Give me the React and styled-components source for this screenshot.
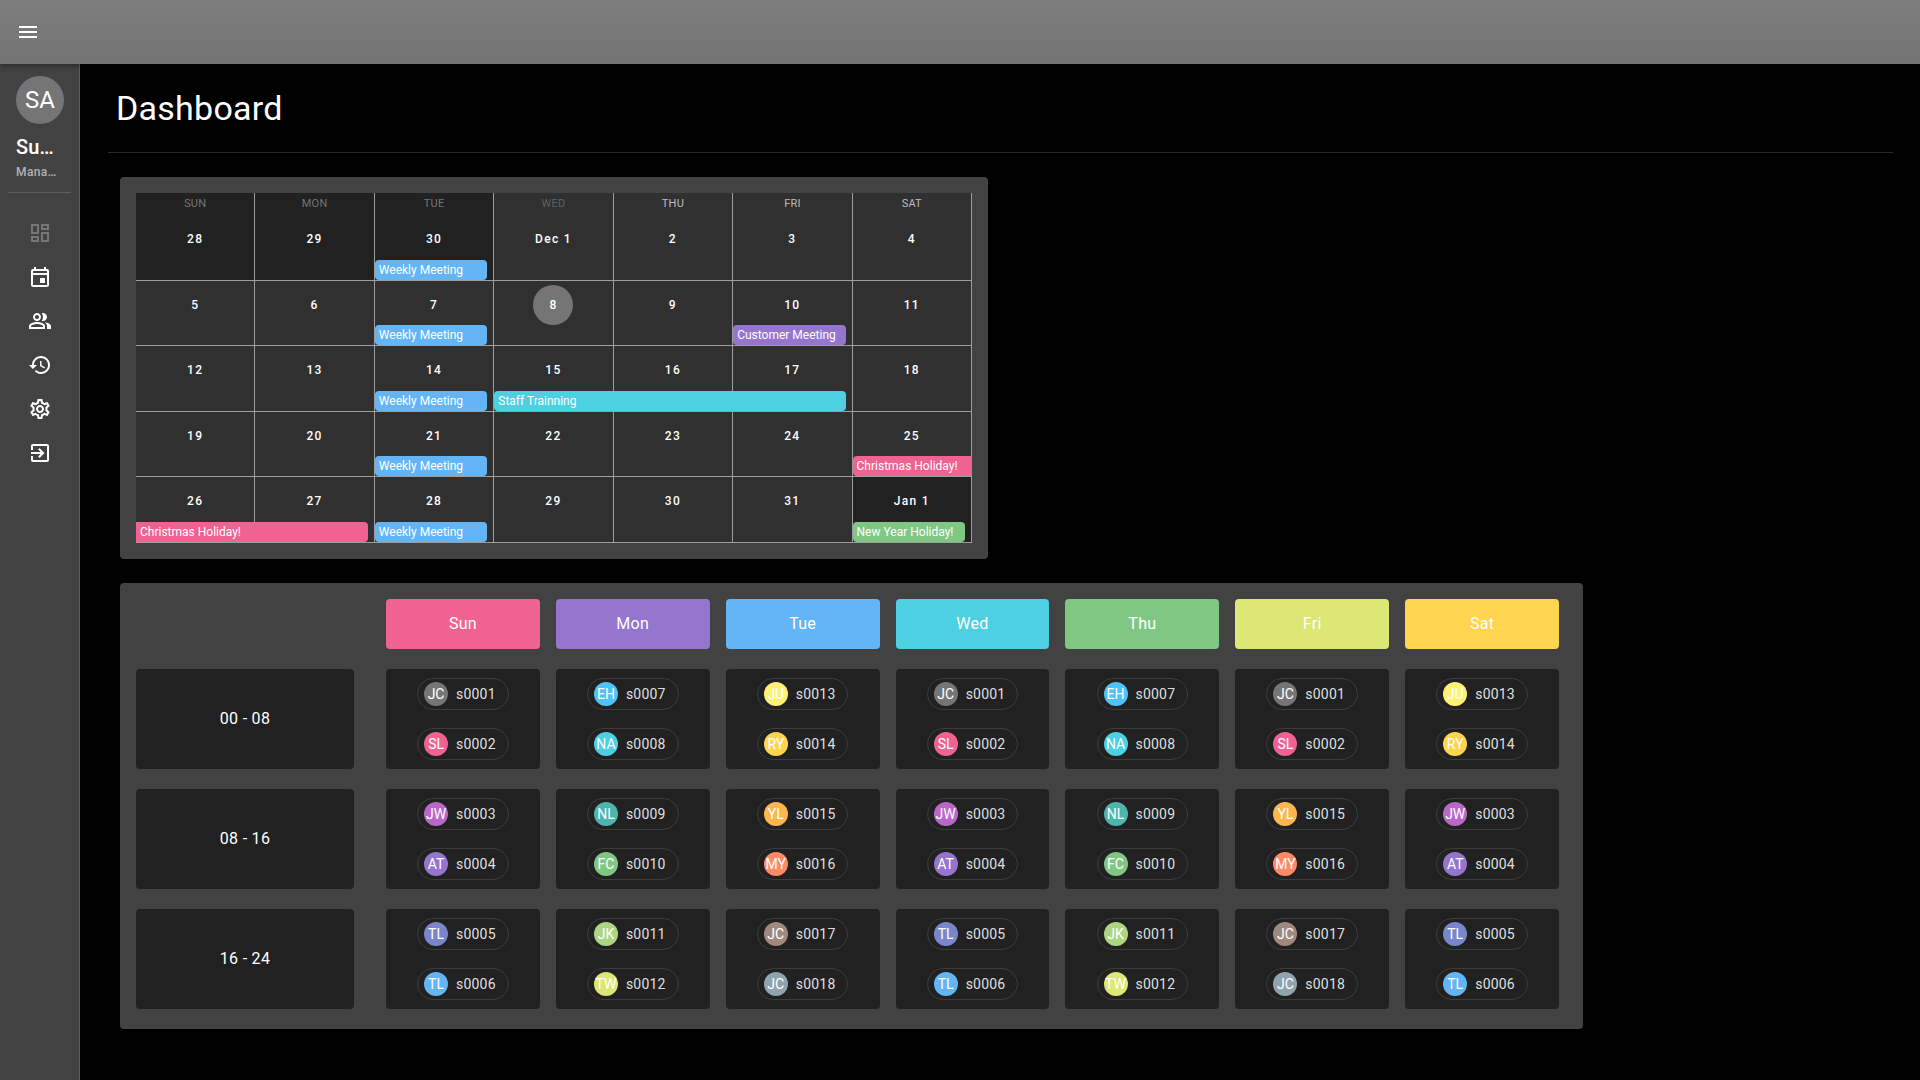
import React from 'react';
import styled, { createGlobalStyle } from 'styled-components';

const GlobalStyle = createGlobalStyle`
    html, body {
        margin: 0;
        padding: 0;
        background: #000;
        font-family: Roboto, "Liberation Sans", sans-serif;
        color: #fff;
        overflow: hidden;
    }
    * { box-sizing: border-box; }
`;

const colors = {
    pink: '#f06292',
    purple: '#9575cd',
    blue: '#64b5f6',
    cyan: '#4dd0e1',
    green: '#81c784',
    lime: '#dce775',
    amber: '#ffd54f',
};

const navIcons = [
    { name: 'dashboard', dim: true, d: 'M19 5v2h-4V5h4M9 5v6H5V5h4m10 8v6h-4v-6h4M9 17v2H5v-2h4M21 3h-8v6h8V3zM11 3H3v10h8V3zm10 8h-8v10h8V11zm-10 4H3v6h8v-6z' },
    { name: 'event', d: 'M19 4h-1V2h-2v2H8V2H6v2H5c-1.11 0-1.99.9-1.99 2L3 20c0 1.1.89 2 2 2h14c1.1 0 2-.9 2-2V6c0-1.1-.9-2-2-2zm0 16H5V10h14v10zm0-12H5V6h14v2zm-2 5h-5v5h5v-5z' },
    { name: 'people', d: 'M16.67 13.13C18.04 14.06 19 15.32 19 17v3h4v-3c0-2.18-3.57-3.47-6.33-3.87z M15 12c2.21 0 4-1.79 4-4s-1.79-4-4-4c-.47 0-.91.1-1.33.24C14.5 5.27 15 6.58 15 8s-.5 2.73-1.33 3.76c.42.14.86.24 1.33.24z M9 12c2.21 0 4-1.79 4-4s-1.79-4-4-4-4 1.79-4 4 1.79 4 4 4zm0-6c1.1 0 2 .9 2 2s-.9 2-2 2-2-.9-2-2 .9-2 2-2z M9 13c-2.67 0-8 1.34-8 4v3h16v-3c0-2.66-5.33-4-8-4zm6 5H3v-.99C3.2 16.29 6.3 15 9 15s5.8 1.29 6 2v1z' },
    { name: 'history', d: 'M13 3c-4.97 0-9 4.03-9 9H1l3.89 3.89.07.14L9 12H6c0-3.87 3.13-7 7-7s7 3.13 7 7-3.13 7-7 7c-1.93 0-3.68-.79-4.94-2.06l-1.42 1.42C8.27 19.99 10.51 21 13 21c4.97 0 9-4.03 9-9s-4.03-9-9-9zm-1 5v5l4.28 2.54.72-1.21-3.5-2.08V8H12z' },
    { name: 'settings', d: 'M19.43 12.98c.04-.32.07-.64.07-.98 0-.34-.03-.66-.07-.98l2.11-1.65c.19-.15.24-.42.12-.64l-2-3.46c-.09-.16-.26-.25-.44-.25-.06 0-.12.01-.17.03l-2.49 1c-.52-.4-1.08-.73-1.69-.98l-.38-2.65C14.46 2.18 14.25 2 14 2h-4c-.25 0-.46.18-.49.42l-.38 2.65c-.61.25-1.17.59-1.69.98l-2.49-1c-.06-.02-.12-.03-.18-.03-.17 0-.34.09-.43.25l-2 3.46c-.13.22-.07.49.12.64l2.11 1.65c-.04.32-.07.65-.07.98 0 .33.03.66.07.98l-2.11 1.65c-.19.15-.24.42-.12.64l2 3.46c.09.16.26.25.44.25.06 0 .12-.01.17-.03l2.49-1c.52.4 1.08.73 1.69.98l.38 2.65c.03.24.24.42.49.42h4c.25 0 .46-.18.49-.42l.38-2.65c.61-.25 1.17-.59 1.69-.98l2.49 1c.06.02.12.03.18.03.17 0 .34-.09.43-.25l2-3.46c.12-.22.07-.49-.12-.64l-2.11-1.65zm-1.98-1.71c.04.31.05.52.05.73 0 .21-.02.43-.05.73l-.14 1.13.89.7 1.08.84-.7 1.21-1.27-.51-1.04-.42-.9.68c-.43.32-.84.56-1.25.73l-1.06.43-.16 1.13-.2 1.35h-1.4l-.19-1.35-.16-1.13-1.06-.43c-.43-.18-.83-.41-1.23-.71l-.91-.7-1.06.43-1.27.51-.7-1.21 1.08-.84.89-.7-.14-1.13c-.03-.31-.05-.54-.05-.74s.02-.43.05-.73l.14-1.13-.89-.7-1.08-.84.7-1.21 1.27.51 1.04.42.9-.68c.43-.32.84-.56 1.25-.73l1.06-.43.16-1.13.2-1.35h1.39l.19 1.35.16 1.13 1.06.43c.43.18.83.41 1.23.71l.91.7 1.06-.43 1.27-.51.7 1.21-1.07.85-.89.7.14 1.13zM12 8c-2.21 0-4 1.79-4 4s1.79 4 4 4 4-1.79 4-4-1.79-4-4-4zm0 6c-1.1 0-2-.9-2-2s.9-2 2-2 2 .9 2 2-.9 2-2 2z' },
    { name: 'exit', d: 'M10.09 15.59L11.5 17l5-5-5-5-1.41 1.41L12.67 11H3v2h9.67l-2.58 2.59zM19 3H5c-1.11 0-2 .9-2 2v4h2V5h14v14H5v-4H3v4c0 1.1.89 2 2 2h14c1.1 0 2-.9 2-2V5c0-1.1-.9-2-2-2z' },
];

// header labels sit in the first week row
const weeks = [
    [
        { label: '28', head: 'SUN', headTone: 'mid', dark: true },
        { label: '29', head: 'MON', headTone: 'mid', dark: true },
        { label: '30', head: 'TUE', headTone: 'mid', dark: true },
        { label: 'Dec 1', head: 'WED', headTone: 'dim' },
        { label: '2', head: 'THU', headTone: 'bright' },
        { label: '3', head: 'FRI', headTone: 'bright' },
        { label: '4', head: 'SAT', headTone: 'bright' },
    ],
    [{ label: '5' }, { label: '6' }, { label: '7' }, { label: '8', today: true }, { label: '9' }, { label: '10' }, { label: '11' }],
    [{ label: '12' }, { label: '13' }, { label: '14' }, { label: '15' }, { label: '16' }, { label: '17' }, { label: '18' }],
    [{ label: '19' }, { label: '20' }, { label: '21' }, { label: '22' }, { label: '23' }, { label: '24' }, { label: '25' }],
    [{ label: '26' }, { label: '27' }, { label: '28' }, { label: '29' }, { label: '30' }, { label: '31' }, { label: 'Jan 1', dark: true }],
];

const weekEvents = [
    [{ title: 'Weekly Meeting', start: 3, span: 1, color: colors.blue }],
    [
        { title: 'Weekly Meeting', start: 3, span: 1, color: colors.blue },
        { title: 'Customer Meeting', start: 6, span: 1, color: colors.purple },
    ],
    [
        { title: 'Weekly Meeting', start: 3, span: 1, color: colors.blue },
        { title: 'Staff Trainning', start: 4, span: 3, color: colors.cyan },
    ],
    [
        { title: 'Weekly Meeting', start: 3, span: 1, color: colors.blue },
        { title: 'Christmas Holiday!', start: 7, span: 1, color: colors.pink, openEnd: true },
    ],
    [
        { title: 'Christmas Holiday!', start: 1, span: 2, color: colors.pink, openStart: true },
        { title: 'Weekly Meeting', start: 3, span: 1, color: colors.blue },
        { title: 'New Year Holiday!', start: 7, span: 1, color: colors.green },
    ],
];

const days = [
    { name: 'Sun', color: colors.pink },
    { name: 'Mon', color: colors.purple },
    { name: 'Tue', color: colors.blue },
    { name: 'Wed', color: colors.cyan },
    { name: 'Thu', color: colors.green },
    { name: 'Fri', color: colors.lime },
    { name: 'Sat', color: colors.amber },
];

const staffA = [
    [['JC', 's0001', '#757575'], ['SL', 's0002', '#f06292']],
    [['JW', 's0003', '#ba68c8'], ['AT', 's0004', '#9575cd']],
    [['TL', 's0005', '#7986cb'], ['TL', 's0006', '#64b5f6']],
];
const staffB = [
    [['EH', 's0007', '#4fc3f7'], ['NA', 's0008', '#4dd0e1']],
    [['NL', 's0009', '#4db6ac'], ['FC', 's0010', '#81c784']],
    [['JK', 's0011', '#aed581'], ['TW', 's0012', '#dce775']],
];
const staffC = [
    [['JU', 's0013', '#fff176'], ['RY', 's0014', '#ffd54f']],
    [['YL', 's0015', '#ffb74d'], ['MY', 's0016', '#ff8a65']],
    [['JC', 's0017', '#a1887f'], ['JC', 's0018', '#90a4ae']],
];

const shifts = ['00 - 08', '08 - 16', '16 - 24'];

// which roster each weekday uses, per shift; Fri and Sat don't follow the plain rotation
const rota = [staffA, staffB, staffC, staffA, staffB, staffA, staffC];
const shiftCell = (dayIdx, shiftIdx) => {
    if (dayIdx === 5 && shiftIdx > 0) return staffC[shiftIdx];
    if (dayIdx === 6 && shiftIdx > 0) return staffA[shiftIdx];
    return rota[dayIdx][shiftIdx];
};

function App() {
    return (
        <Page>
            <GlobalStyle />
            <AppBar>
                <MenuButton aria-label="menu">
                    <Icon viewBox="0 0 24 24"><path d="M3 18h18v-2H3v2zm0-5h18v-2H3v2zm0-7v2h18V6H3z" /></Icon>
                </MenuButton>
            </AppBar>
            <Body>
                <Sidebar>
                    <ProfileAvatar>SA</ProfileAvatar>
                    <ProfileName>Super Admin</ProfileName>
                    <ProfileRole>Manager</ProfileRole>
                    <SideDivider />
                    <NavList>
                        {navIcons.map((icon) => (
                            <NavItem key={icon.name} $dim={icon.dim}>
                                <Icon viewBox="0 0 24 24"><path d={icon.d} /></Icon>
                            </NavItem>
                        ))}
                    </NavList>
                </Sidebar>
                <Main>
                    <Title>Dashboard</Title>
                    <TitleDivider />
                    <CalendarCard>
                        {weeks.map((week, w) => (
                            <WeekRow key={w} $first={w === 0}>
                                {week.map((day, d) => (
                                    <DayCell key={d} $col={d + 1} $dark={day.dark}>
                                        {day.head && <DayHead $tone={day.headTone}>{day.head}</DayHead>}
                                        <DayNumber $today={day.today}>{day.label}</DayNumber>
                                    </DayCell>
                                ))}
                                {weekEvents[w].map((ev) => (
                                    <EventBar
                                        key={ev.title}
                                        $start={ev.start}
                                        $span={ev.span}
                                        $color={ev.color}
                                        $openStart={ev.openStart}
                                        $openEnd={ev.openEnd}
                                    >
                                        {ev.title}
                                    </EventBar>
                                ))}
                            </WeekRow>
                        ))}
                    </CalendarCard>
                    <ScheduleCard>
                        <ScheduleRow>
                            <ShiftSpacer />
                            <DayColumns>
                                {days.map((day) => (
                                    <DayBadge key={day.name} $color={day.color}>{day.name}</DayBadge>
                                ))}
                            </DayColumns>
                        </ScheduleRow>
                        {shifts.map((shift, s) => (
                            <ScheduleRow key={shift}>
                                <ShiftLabel>{shift}</ShiftLabel>
                                <DayColumns>
                                    {days.map((day, d) => (
                                        <ShiftCell key={day.name}>
                                            {shiftCell(d, s).map(([initials, code, color]) => (
                                                <StaffChip key={code}>
                                                    <ChipAvatar $color={color}>{initials}</ChipAvatar>
                                                    <ChipLabel>{code}</ChipLabel>
                                                </StaffChip>
                                            ))}
                                        </ShiftCell>
                                    ))}
                                </DayColumns>
                            </ScheduleRow>
                        ))}
                    </ScheduleCard>
                </Main>
            </Body>
        </Page>
    );
}

const Page = styled.div`
    display: flex;
    flex-direction: column;
    width: 1920px;
    height: 1080px;
    background: #000;
`;

const AppBar = styled.header`
    display: flex;
    align-items: center;
    flex: 0 0 64px;
    padding-left: 16px;
    background: linear-gradient(180deg, #7d7d7d 0%, #747474 100%);
    box-shadow: 0 2px 4px -1px rgba(0, 0, 0, 0.2), 0 4px 5px 0 rgba(0, 0, 0, 0.14);
    position: relative;
    z-index: 2;
`;

const MenuButton = styled.button`
    display: flex;
    padding: 0;
    border: none;
    background: none;
    color: #fff;
`;

const Icon = styled.svg`
    width: 24px;
    height: 24px;
    fill: currentColor;
    display: block;
`;

const Body = styled.div`
    display: flex;
    flex: 1;
    min-height: 0;
`;

const Sidebar = styled.aside`
    display: flex;
    flex-direction: column;
    flex: 0 0 80px;
    padding-top: 12px;
    background: #424242;
    border-right: 1px solid #5f5f5f;
`;

const ProfileAvatar = styled.div`
    display: flex;
    align-items: center;
    justify-content: center;
    width: 48px;
    height: 48px;
    margin-left: 16px;
    border-radius: 50%;
    background: #757575;
    font-size: 24px;
`;

const ProfileName = styled.div`
    width: 48px;
    margin: 9px 0 0 16px;
    font-size: 20px;
    font-weight: 500;
    line-height: 28px;
    letter-spacing: 0.15px;
    white-space: nowrap;
    overflow: hidden;
    text-overflow: ellipsis;
`;

const ProfileRole = styled.div`
    width: 44px;
    margin: 1px 0 0 16px;
    font-size: 12px;
    font-weight: 500;
    line-height: 20px;
    letter-spacing: 0.4px;
    color: rgba(255, 255, 255, 0.6);
    white-space: nowrap;
    overflow: hidden;
    text-overflow: ellipsis;
`;

const SideDivider = styled.div`
    height: 1px;
    margin: 10px 8px 0;
    background: #5f5f5f;
`;

const NavList = styled.nav`
    display: flex;
    flex-direction: column;
    align-items: center;
    gap: 20px;
    padding-top: 28px;
`;

const NavItem = styled.div`
    color: ${(p) => (p.$dim ? '#757575' : '#fff')};
`;

const Main = styled.main`
    flex: 1;
    padding: 0 27px 0 28px;
`;

const Title = styled.h1`
    margin: 0;
    padding: 23px 0 23px 8px;
    font-size: 34px;
    font-weight: 400;
    line-height: 42px;
    letter-spacing: 0.25px;
`;

const TitleDivider = styled.div`
    height: 1px;
    background: #2a2a2a;
`;

const CalendarCard = styled.section`
    display: flex;
    flex-direction: column;
    width: 868px;
    margin: 24px 0 0 12px;
    padding: 16px;
    border-radius: 4px;
    background: #424242;
`;

const WeekRow = styled.div`
    display: grid;
    grid-template-columns: repeat(7, 1fr);
    height: ${(p) => (p.$first ? '87.5px' : '65.5px')};
`;

const DayCell = styled.div`
    grid-row: 1;
    grid-column: ${(p) => p.$col};
    display: flex;
    flex-direction: column;
    align-items: center;
    padding-top: 4px;
    background: ${(p) => (p.$dark ? '#212121' : '#303030')};
    border-right: 1px solid #9e9e9e;
    border-bottom: 1px solid #9e9e9e;
`;

const headTones = { dim: '#616161', mid: '#757575', bright: '#bdbdbd' };

const DayHead = styled.div`
    height: 22px;
    font-size: 11px;
    line-height: 14px;
    letter-spacing: 0.2px;
    color: ${(p) => headTones[p.$tone]};
`;

const DayNumber = styled.div`
    display: flex;
    align-items: center;
    justify-content: center;
    min-width: 40px;
    height: 40px;
    border-radius: 50%;
    font-size: 12px;
    font-weight: 500;
    letter-spacing: 1.3px;
    background: ${(p) => (p.$today ? '#757575' : 'transparent')};
`;

const EventBar = styled.div`
    grid-row: 1;
    grid-column: ${(p) => p.$start} / span ${(p) => p.$span};
    align-self: end;
    height: 20px;
    margin: 0 ${(p) => (p.$openEnd ? '0' : '7px')} 1px 0;
    padding-left: 4px;
    font-size: 12px;
    line-height: 21px;
    color: #fff;
    white-space: nowrap;
    overflow: hidden;
    background: ${(p) => p.$color};
    border-radius: ${(p) => (p.$openStart ? '0' : '4px')} ${(p) => (p.$openEnd ? '0' : '4px')} ${(p) => (p.$openEnd ? '0' : '4px')} ${(p) => (p.$openStart ? '0' : '4px')};
`;

const ScheduleCard = styled.section`
    display: flex;
    flex-direction: column;
    gap: 20px;
    width: 1463px;
    margin: 24px 0 0 12px;
    padding: 16px 24px 20px 16px;
    border-radius: 4px;
    background: #424242;
`;

const ScheduleRow = styled.div`
    display: flex;
    gap: 32px;
`;

const ShiftSpacer = styled.div`
    flex: 0 0 218px;
`;

const DayColumns = styled.div`
    flex: 1;
    display: grid;
    grid-template-columns: repeat(7, 1fr);
    gap: 16px;
`;

const DayBadge = styled.div`
    display: flex;
    align-items: center;
    justify-content: center;
    height: 50px;
    border-radius: 4px;
    background: ${(p) => p.$color};
    font-size: 16px;
    letter-spacing: 0.3px;
`;

const ShiftLabel = styled.div`
    display: flex;
    align-items: center;
    justify-content: center;
    flex: 0 0 218px;
    height: 100px;
    border-radius: 4px;
    background: #212121;
    font-size: 16px;
    letter-spacing: 0.3px;
`;

const ShiftCell = styled.div`
    display: flex;
    flex-direction: column;
    align-items: center;
    justify-content: space-around;
    height: 100px;
    border-radius: 4px;
    background: #212121;
`;

const StaffChip = styled.div`
    display: flex;
    align-items: center;
    height: 32px;
    padding: 0 12px 0 6px;
    border: 1px solid #3c3c3c;
    border-radius: 16px;
`;

const ChipAvatar = styled.div`
    display: flex;
    align-items: center;
    justify-content: center;
    width: 24px;
    height: 24px;
    margin-right: 8px;
    border-radius: 50%;
    background: ${(p) => p.$color};
    font-size: 14px;
`;

const ChipLabel = styled.span`
    font-size: 14px;
    letter-spacing: 0.2px;
    color: rgba(255, 255, 255, 0.87);
`;

export default App;
